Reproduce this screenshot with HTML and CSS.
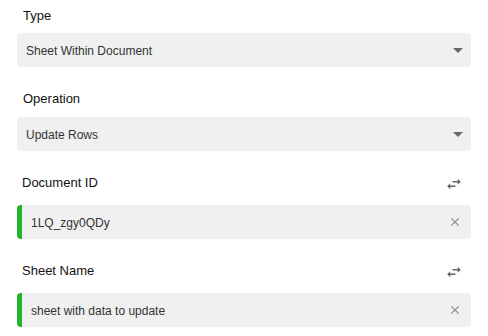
FILE: index.html
```html
<!DOCTYPE html>
<html>
<head>
<meta charset="utf-8">
<link rel="stylesheet" href="styles.css">
</head>
<body>
<div class="form">
  <div class="field">
    <div class="label">Type</div>
    <div class="select">
      <span class="value">Sheet Within Document</span>
      <span class="caret"></span>
    </div>
  </div>
  <div class="field">
    <div class="label">Operation</div>
    <div class="select">
      <span class="value">Update Rows</span>
      <span class="caret"></span>
    </div>
  </div>
  <div class="field">
    <div class="label-row">
      <div class="label">Document ID</div>
      <svg class="swap" viewBox="0 0 24 24"><path d="M6.99 11L3 15l3.99 4v-3H14v-2H6.99v-3zM21 9l-4-4v3h-7v2h7v3l4-4z"/></svg>
    </div>
    <div class="input">
      <span class="value">1LQ_zgy0QDy</span>
      <svg class="close" viewBox="0 0 24 24"><path d="M19 6.41L17.59 5 12 10.59 6.41 5 5 6.41 10.59 12 5 17.59 6.41 19 12 13.41 17.59 19 19 17.59 13.41 12z"/></svg>
    </div>
  </div>
  <div class="field">
    <div class="label-row">
      <div class="label">Sheet Name</div>
      <svg class="swap" viewBox="0 0 24 24"><path d="M6.99 11L3 15l3.99 4v-3H14v-2H6.99v-3zM21 9l-4-4v3h-7v2h7v3l4-4z"/></svg>
    </div>
    <div class="input">
      <span class="value">sheet with data to update</span>
      <svg class="close" viewBox="0 0 24 24"><path d="M19 6.41L17.59 5 12 10.59 6.41 5 5 6.41 10.59 12 5 17.59 6.41 19 12 13.41 17.59 19 19 17.59 13.41 12z"/></svg>
    </div>
  </div>
</div>
</body>
</html>
```

FILE: styles.css
```css
html, body {
  margin: 0;
  padding: 0;
  background: #ffffff;
}
body {
  font-family: "Liberation Sans", Arial, sans-serif;
  color: #111;
}
.form {
  padding: 8px 17px 0 17px;
  display: flex;
  flex-direction: column;
  gap: 24px;
}
.field {
  display: flex;
  flex-direction: column;
}
.label {
  font-size: 13px;
  line-height: 16px;
  height: 16px;
  padding-left: 6px;
  color: #111;
}
.field > .label {
  margin-bottom: 10px;
}
.field:first-child > .label {
  margin-bottom: 9px;
}
.label-row {
  display: flex;
  align-items: center;
  justify-content: space-between;
  height: 16px;
  margin-bottom: 14px;
}
.label-row .label {
  padding-left: 5px;
}
.swap {
  width: 18px;
  height: 18px;
  fill: #666;
  margin-right: 8px;
  margin-top: 2px;
}
.select, .input {
  height: 34px;
  background: #f0f0f0;
  border-radius: 4px;
  display: flex;
  align-items: center;
  justify-content: space-between;
  box-sizing: border-box;
  font-size: 12px;
  color: #333;
}
.select {
  padding: 0 8px 0 9px;
}
.input {
  border-left: 5px solid #22b42a;
  padding: 0 9px 0 9px;
}
.value {
  line-height: 34px;
  padding-top: 1px;
}
.caret {
  width: 0;
  height: 0;
  border-left: 5px solid transparent;
  border-right: 5px solid transparent;
  border-top: 5px solid #666;
}
.close {
  width: 14px;
  height: 14px;
  fill: #888;
}
```
